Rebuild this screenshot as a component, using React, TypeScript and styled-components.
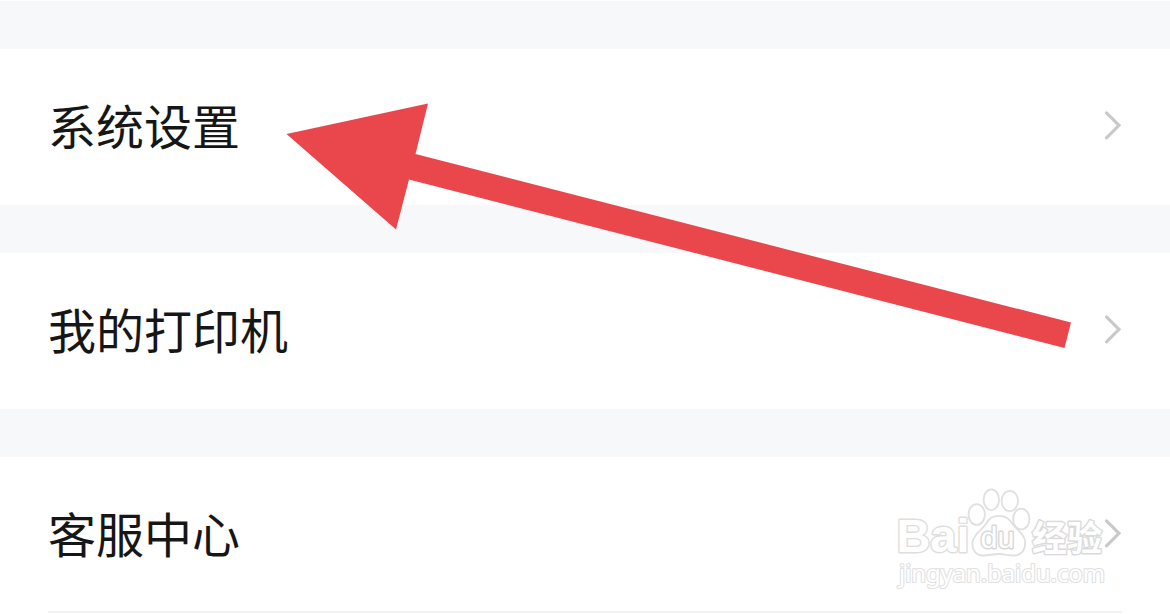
import React from 'react';
import styled, { createGlobalStyle } from 'styled-components';

const GlobalStyle = createGlobalStyle`
  body {
    margin: 0;
    background-color: #fff;
  }
`;

const Page = styled.div`
  position: relative;
  box-sizing: border-box;
  width: 1170px;
  height: 614px;
  padding-top: 1px;
  overflow: hidden;
  background-color: #fff;
  font-family: 'Noto Sans CJK SC', sans-serif;
`;

const Gap = styled.div`
  height: 48px;
  background-color: #f6f8fa;
`;

const Row = styled.div`
  display: flex;
  justify-content: space-between;
  align-items: center;
  box-sizing: border-box;
  height: 156px;
  padding: 0 48px;
  background-color: #fff;
`;

const Label = styled.span`
  margin-bottom: 6px;
  font-size: 48px;
  line-height: 72px;
  color: #161616;
`;

const Chevron = styled.svg`
  display: block;
  width: 18px;
  height: 30px;
  margin-bottom: 4px;
  fill: none;
  stroke: #c9c9c9;
  stroke-width: 3.1;
  stroke-linecap: round;
`;

const Divider = styled.div`
  height: 2px;
  margin: -2px 48px 0;
  background-color: #f3f3f3;
`;

const Arrow = styled.svg`
  position: absolute;
  top: 100px;
  left: 280px;
  width: 800px;
  height: 260px;
  fill: #e9474c;
`;

const Watermark = styled.svg`
  position: absolute;
  top: 480px;
  left: 890px;
  width: 225px;
  height: 120px;
  fill: #fff;
  stroke: #e0e0e0;
  stroke-width: 1.8;
  stroke-linejoin: round;
`;

const MarkText = styled.text<{ $size: number; $bold?: boolean; $latin?: boolean; $color?: string }>`
  font-family: ${(p) => (p.$latin ? "'Liberation Sans'" : "'Noto Sans CJK SC'")}, sans-serif;
  font-size: ${(p) => p.$size}px;
  font-weight: ${(p) => (p.$bold ? 700 : 400)};
  stroke: ${(p) => p.$color || '#dedede'};
  stroke-width: 2.8;
  paint-order: stroke;
`;

const SiteText = styled(MarkText)`
  font-family: 'Noto Sans', sans-serif;
  stroke-width: 2.2;
`;

const items = ['系统设置', '我的打印机', '客服中心'];

function MenuRow({ label }: { label: string }) {
    return (
        <Row>
            <Label>{label}</Label>
            <Chevron viewBox="0 0 18 30">
                <path d="M2.5 2.8L15 15.3L2.5 27.8" />
            </Chevron>
        </Row>
    );
}

function BaiduWatermark() {
    return (
        <Watermark viewBox="0 0 225 120">
            <MarkText x="6.5" y="72" $size={46} $bold $latin textLength="73" lengthAdjust="spacingAndGlyphs">Bai</MarkText>
            <ellipse cx="86.7" cy="34.5" rx="8.2" ry="10.4" />
            <ellipse cx="101.3" cy="19.7" rx="7.7" ry="10.4" />
            <ellipse cx="119.8" cy="21" rx="8.2" ry="10.2" />
            <ellipse cx="131.3" cy="39" rx="8.2" ry="10.4" />
            <path d="M109 35.8C102 35.8 99 39 95.5 44.5C92 50 83 54 82.5 63C82 70 86 75.4 93 75.5C99 75.5 103 74 109 74C115 74 119 75.8 125 75.5C132 75 136 69 135 61C134 53.5 127 50.5 123 44.5C119 38.5 116 35.8 109 35.8Z" />
            <MarkText x="90.5" y="68" $size={29} $latin $color="#d8d8d8" textLength="34" lengthAdjust="spacingAndGlyphs">du</MarkText>
            <MarkText x="142" y="71" $size={35} $bold $color="#dadada">经验</MarkText>
            <SiteText x="9" y="101.5" $size={23} $color="#e2e2e2" textLength="206" lengthAdjust="spacingAndGlyphs">jingyan.baidu.com</SiteText>
        </Watermark>
    );
}

function App() {
    return (
        <Page>
            <GlobalStyle />
            {items.map((label) => (
                <React.Fragment key={label}>
                    <Gap />
                    <MenuRow label={label} />
                </React.Fragment>
            ))}
            <Divider />
            <Arrow viewBox="280 100 800 260">
                <path d="M286.5 134L428 103.5L415.5 154L1071 322.5L1064.5 348L409 179.5L396 229.5Z" />
            </Arrow>
            <BaiduWatermark />
        </Page>
    );
}

export default App;
